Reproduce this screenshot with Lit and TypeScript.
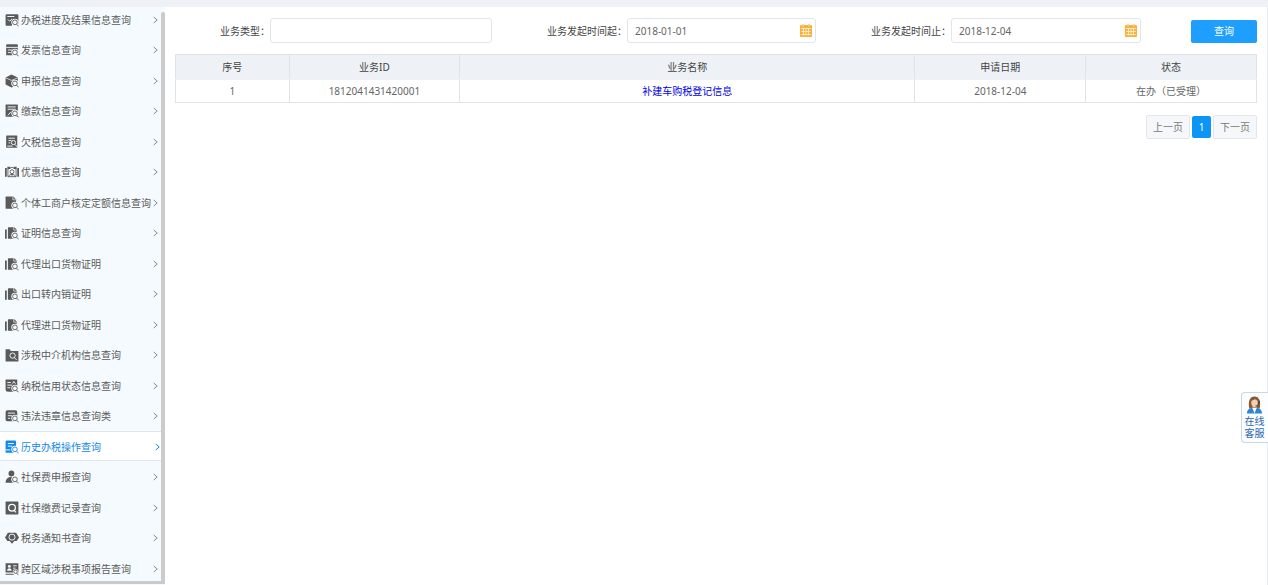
import { LitElement, html, svg, css } from "lit";
import { customElement, state } from "lit/decorators.js";
import { classMap } from "lit/directives/class-map.js";

// Magnifier shared by most menu icons: a halo clears the shape behind it.
const lens = svg`
  <circle class="halo" cx="17" cy="16" r="6.2"></circle>
  <circle class="ring" cx="17" cy="16" r="4"></circle>
  <path class="ring" d="M20 19.200 23.500 23"></path>`;

const icons: Record<string, unknown> = {
  progress: svg`
    <path d="M3 2h18a2 2 0 0 1 2 2v15H12v3H3a2 2 0 0 1-2-2V4a2 2 0 0 1 2-2z"></path>
    <path class="cut" d="M4 6h12M5 11l3 3 4-4"></path>${lens}`,
  invoice: svg`
    <path d="M4 2h16a2 2 0 0 1 2 2v17H2V4a2 2 0 0 1 2-2z"></path>
    <path class="cut" d="M2 7.500h20M5 12h7M5 16.500h5"></path>${lens}`,
  declare: svg`
    <path d="M11 1 22 6v13l-11 4L1 18V6z"></path>
    <path class="cut thin" d="M1 6.500l10 4.500 11-4.500"></path>${lens}`,
  pay: svg`
    <path d="M2 1h19a1 1 0 0 1 1 1v20H2a1 1 0 0 1-1-1V2a1 1 0 0 1 1-1z"></path>
    <path class="cut" d="M4.500 5h14M4.500 9h14M5 19.500l5-6"></path>${lens}`,
  owed: svg`
    <path d="M3 1h17a1 1 0 0 1 1 1v20H3a1 1 0 0 1-1-1V2a1 1 0 0 1 1-1z"></path>
    <path class="cut" d="M6 5.500h11M6 9.500h5M6 13.500h3M4 19h9"></path>
    <circle class="cut" cx="14.500" cy="13" r="3.600"></circle>
    <path class="cut" d="m17 16 4 4.500"></path>`,
  benefit: svg`
    <path d="M0 5h3v15H0zM21 5h3v15h-3zM4 3h5v4H4zM15 3h5v4h-5z"></path>
    <path class="ring" d="M5 20V7l7-3 7 3v13z"></path>
    <circle class="ring" cx="12" cy="11.500" r="3.400"></circle>
    <path class="ring" d="M6 20c1-5 11-5 12 0M10 15l2 3 2-3"></path>`,
  fixed: svg`
    <path d="M2 1h12l5 5v16H2a1 1 0 0 1-1-1V2a1 1 0 0 1 1-1z"></path>
    <path class="cut thin" d="M13.500 1v5.500H19"></path>${lens}`,
  proof: svg`
    <path d="M0 6h3v16H0zM6 2h10l4 4v16H5V3a1 1 0 0 1 1-1z"></path>
    <path class="cut thin" d="M15 2v5h5"></path>${lens}`,
  agency: svg`
    <path d="M1 2h7l2 3h13v18H1z"></path>
    <circle class="cut" cx="13" cy="13" r="4.500"></circle>
    <path class="cut" d="m16 16.500 4 4"></path>`,
  credit: svg`
    <path d="M2 1h18a1 1 0 0 1 1 1v20H5a4 4 0 0 1-4-4V2a1 1 0 0 1 1-1z"></path>
    <path class="cut" d="M4 6h6M13 8l2-4 3 4M4 10.500h8M4 15h5"></path>${lens}`,
  illegal: svg`
    <path d="M4 2h14a3 3 0 0 1 3 3v16H4a3 3 0 0 1-3-3V5a3 3 0 0 1 3-3z"></path>
    <path class="cut" d="M5 7h12M5 11.500h7M5 16h4"></path>${lens}`,
  history: svg`
    <path d="M3 1h14a2 2 0 0 1 2 2v19H1V3a2 2 0 0 1 2-2z"></path>
    <path class="cut" d="M5 6h10M5 10.500h7M1 17h8"></path>${lens}`,
  person: svg`
    <circle cx="11" cy="6" r="5"></circle>
    <path d="M1 22c0-7 4-10 10-10s9 3 9 10z"></path>${lens}`,
  record: svg`
    <path d="M2 1h20a1 1 0 0 1 1 1v20a1 1 0 0 1-1 1H2a1 1 0 0 1-1-1V2a1 1 0 0 1 1-1z"></path>
    <circle class="cut bold" cx="12" cy="11.500" r="5.800"></circle>
    <path class="cut bold" d="m15.500 16 3.500 3.500"></path>`,
  notice: svg`
    <path d="M5 3h14l5 8-4 6h-4l-4 5-4-5H4l-4-6z"></path>
    <circle class="cut" cx="12" cy="10.500" r="5.200"></circle>`,
  region: svg`
    <path d="M1 2h22v16H1zM1 20h14v2H1z"></path>
    <circle class="dot" cx="7.500" cy="7.500" r="2.500"></circle>
    <path class="dot" d="M3.500 15c0-6 8-6 8 0z"></path>
    <path class="cut" d="M14 6.500h6M14 10.500h4"></path>
    <circle class="halo" cx="18" cy="16.500" r="4.500"></circle>
    <circle class="ring" cx="18" cy="16.500" r="3"></circle>
    <path class="ring" d="m20 19 3 3.500"></path>`,
};

const menu: { icon: string; label: string }[] = [
  { icon: "progress", label: "办税进度及结果信息查询" },
  { icon: "invoice", label: "发票信息查询" },
  { icon: "declare", label: "申报信息查询" },
  { icon: "pay", label: "缴款信息查询" },
  { icon: "owed", label: "欠税信息查询" },
  { icon: "benefit", label: "优惠信息查询" },
  { icon: "fixed", label: "个体工商户核定定额信息查询" },
  { icon: "proof", label: "证明信息查询" },
  { icon: "proof", label: "代理出口货物证明" },
  { icon: "proof", label: "出口转内销证明" },
  { icon: "proof", label: "代理进口货物证明" },
  { icon: "agency", label: "涉税中介机构信息查询" },
  { icon: "credit", label: "纳税信用状态信息查询" },
  { icon: "illegal", label: "违法违章信息查询类" },
  { icon: "history", label: "历史办税操作查询" },
  { icon: "person", label: "社保费申报查询" },
  { icon: "record", label: "社保缴费记录查询" },
  { icon: "notice", label: "税务通知书查询" },
  { icon: "region", label: "跨区域涉税事项报告查询" },
];

const font = css`"Noto Sans", "Noto Sans CJK SC", sans-serif`;

@customElement("side-menu")
class SideMenu extends LitElement {
  static styles = css`
    :host {
      display: grid;
      grid-template-columns: minmax(0, 1fr) 4px;
      grid-template-rows: minmax(0, 1fr) 4px;
      overflow: hidden;
      background: #f5fafe;
      font: 10px/14px ${font};
    }
    .view { overflow: hidden; }
    .list { list-style: none; margin: -3px 0 0; padding: 0; }
    .item { height: 30px; }
    .item:nth-child(even) { height: 31px; }
    .link {
      box-sizing: border-box;
      height: 100%;
      display: flex;
      align-items: center;
      gap: 2px;
      padding: 1px 3px 0 5px;
      color: #5a5a5a;
      text-decoration: none;
      white-space: nowrap;
      border: solid transparent;
      border-width: 1px 0;
      --back: #f5fafe;
    }
    .link.active {
      color: #1389ea;
      background: #fff;
      border-color: #dfe5ea;
      padding-right: 1px;
      --back: #fff;
    }
    .label { flex: 1; }
    .icon { width: 14px; height: 14px; fill: currentColor; flex: none; }
    .halo, .dot { fill: var(--back); }
    .ring { fill: none; stroke: currentColor; stroke-width: 1.5; }
    .cut { fill: none; stroke: var(--back); stroke-width: 1.6; }
    .thin { stroke-width: 1.2; }
    .bold { stroke-width: 2.2; }
    .arrow { width: 5px; height: 8px; fill: none; stroke: #858b90; stroke-width: 1; flex: none; }
    .active .arrow { stroke: #1389ea; }
    .vbar { background: #cbcbcb; margin-top: 5px; border-radius: 2px 2px 0 0; }
    .hbar { grid-column: 1 / -1; background: #cbcbcb; margin-bottom: 1px; }
  `;

  @state() private current = 14;

  private pick(e: Event, i: number) {
    e.preventDefault();
    this.current = i;
  }

  render() {
    return html`
      <nav class="view">
        <ul class="list">
          ${menu.map(
            (m, i) => html`<li class="item">
              <a
                href="#"
                class=${classMap({ link: true, active: i === this.current })}
                @click=${(e: Event) => this.pick(e, i)}
              >
                <svg class="icon" viewBox="0 0 24 24" aria-hidden="true">${icons[m.icon]}</svg>
                <span class="label">${m.label}</span>
                <svg class="arrow" viewBox="0 0 5 8" aria-hidden="true"><path d="M.7 1 4.200 4 .7 7"></path></svg>
              </a>
            </li>`
          )}
        </ul>
      </nav>
      <div class="vbar"></div>
      <div class="hbar"></div>
    `;
  }
}

@customElement("app-root")
class AppRoot extends LitElement {
  static styles = css`
    :host {
      display: flex;
      flex-direction: column;
      height: 100vh;
      background: #fff;
      color: #444;
      font: 10px/14px ${font};
    }
    .top { height: 7px; background: #eef2f6; flex: none; }
    .body {
      flex: 1;
      min-height: 0;
      display: grid;
      grid-template-columns: 165px minmax(0, 1fr);
    }
    .main { padding: 11px 10px 0; border-right: 1px solid #e6edf2; }
    .search {
      display: grid;
      grid-template-columns: 95fr 222fr 135fr 189fr 135fr 190fr 50fr 66fr;
      align-items: center;
      margin-bottom: 11px;
    }
    .caption { text-align: right; white-space: nowrap; }
    .box {
      box-sizing: border-box;
      width: 100%;
      height: 25px;
      border: 1px solid #e2e6ea;
      border-radius: 3px;
      background: #fff;
    }
    .date { display: flex; align-items: center; padding: 0 3px 0 7px; }
    .input { font: inherit; color: #666; padding: 0 8px; outline: none; min-width: 0; }
    .date .input { flex: 1; border: 0; padding: 1px 0 0; background: none; }
    .cal { width: 12px; height: 13px; flex: none; }
    .submit {
      grid-column: 8;
      height: 23px;
      margin-top: 1px;
      padding: 0;
      border: 0;
      border-radius: 2px;
      background: #1e9fff;
      color: #fff;
      font: inherit;
    }
    .table { width: 100%; table-layout: fixed; border-collapse: collapse; }
    .table th, .table td {
      box-sizing: border-box;
      border: 1px solid #e0e4e8;
      padding: 0;
      text-align: center;
      font-weight: 400;
      height: 23px;
    }
    .table th { background: #eef2f6; height: 25px; border-bottom-color: #eef2f6; }
    .table td { color: #666; }
    .no { width: 10.5%; }
    .mid { width: 15.8%; }
    .name { color: #0000e6; text-decoration: none; }
    .pager { display: flex; justify-content: flex-end; gap: 2px; margin-top: 12px; }
    .page {
      box-sizing: border-box;
      height: 24px;
      padding: 0 6px;
      border: 1px solid #e4e7ea;
      border-radius: 2px;
      background: #f5f7fa;
      color: #777;
      font: inherit;
    }
    .page.on { height: 22px; margin-top: 1px; border: 0; background: #0c95f5; color: #fff; width: 19px; }
    .service {
      position: fixed;
      right: 0;
      top: 67%;
      box-sizing: border-box;
      width: 27px;
      padding: 2px 3px 3px 2px;
      display: flex;
      flex-direction: column;
      align-items: center;
      border: 1px solid #c9d7e6;
      border-right: 0;
      border-radius: 4px 0 0 4px;
      background: #fbfdff;
      color: #2b66ad;
      line-height: 12px;
      text-align: center;
      text-decoration: none;
    }
    .agent { width: 17px; height: 20px; }
  `;

  private calendar() {
    return html`<svg class="cal" viewBox="0 0 12 13" aria-hidden="true">
      <path fill="#f7b13c" d="M1 1h10a1 1 0 0 1 1 1v10a1 1 0 0 1-1 1H1a1 1 0 0 1-1-1V2a1 1 0 0 1 1-1z"></path>
      <path fill="#f7b13c" d="M2.500 0h1v1h-1zM8.500 0h1v1h-1z"></path>
      <path fill="none" stroke="#fff3dc" stroke-width=".8" d="M1.200 4.500h9.600M1.200 7.500h9.600M1.200 10.500h9.600M3.500 4v7.500M6 4v7.500M8.500 4v7.500M3 1v1.500M9 1v1.500"></path>
    </svg>`;
  }

  render() {
    return html`
      <header class="top"></header>
      <div class="body">
        <side-menu></side-menu>
        <main class="main">
          <form class="search" @submit=${(e: Event) => e.preventDefault()}>
            <label class="caption" for="type">业务类型：</label>
            <input class="box input" id="type" type="text" />
            <label class="caption" for="from">业务发起时间起：</label>
            <div class="box date">
              <input class="input" id="from" type="text" value="2018-01-01" />${this.calendar()}
            </div>
            <label class="caption" for="to">业务发起时间止：</label>
            <div class="box date">
              <input class="input" id="to" type="text" value="2018-12-04" />${this.calendar()}
            </div>
            <button class="submit">查询</button>
          </form>
          <table class="table">
            <thead>
              <tr>
                <th class="no">序号</th>
                <th class="mid">业务ID</th>
                <th>业务名称</th>
                <th class="mid">申请日期</th>
                <th class="mid">状态</th>
              </tr>
            </thead>
            <tbody>
              <tr>
                <td>1</td>
                <td>1812041431420001</td>
                <td><a class="name" href="#">补建车购税登记信息</a></td>
                <td>2018-12-04</td>
                <td>在办（已受理）</td>
              </tr>
            </tbody>
          </table>
          <nav class="pager">
            <button class="page">上一页</button>
            <button class="page on">1</button>
            <button class="page">下一页</button>
          </nav>
        </main>
      </div>
      <a class="service" href="#">
        <svg class="agent" viewBox="0 0 18 20" aria-hidden="true">
          <path fill="#8a5a34" d="M3.500 14C2 6 4 1 9 1s7 5 5.500 13l-3-1h-5z"></path>
          <path fill="#f6cfae" d="M5.500 6.500C6 4.500 8 5 9.500 3.800c1.500.7 3 1.200 3 3.700 0 3-1.500 5-3.500 5s-3.500-2.500-3.500-6z"></path>
          <path fill="#2f86d0" d="M1 19c0-4 2.500-5.500 5.500-6.200L9 16l2.500-3.200C14.500 13.500 17 15 17 19z"></path>
          <path fill="#fff" d="M6.500 12.500 9 19l2.500-6.500L9 15z"></path>
          <path fill="none" stroke="#444" stroke-width=".9" d="M13.500 7c0 3-1 4-3.500 4"></path>
          <path fill="#444" d="M13 5.500h1.600v3H13z"></path>
        </svg>
        <span>在线<br />客服</span>
      </a>
    `;
  }
}
